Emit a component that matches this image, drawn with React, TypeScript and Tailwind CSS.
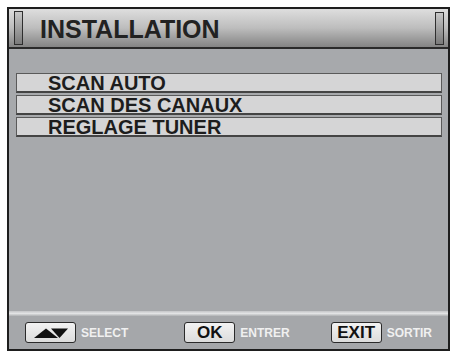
const font = { fontFamily: '"Liberation Sans", Arial, sans-serif' };

function MenuItem({ label }: { label: string }) {
  return (
    <div className="flex h-[20px] items-center border border-b-2 border-[#5a5a5a] border-b-[#444] bg-[#d5d5d6] pl-[31px]">
      <span className="pt-[1px] text-[20px] font-bold leading-none text-[#1d1d1d]">{label}</span>
    </div>
  );
}

function Key({ children, width }: { children: React.ReactNode; width: string }) {
  return (
    <div
      className={`flex h-[21px] ${width} items-center justify-center rounded-[3px] border border-[#2a2a2a] bg-gradient-to-b from-[#f2f2f2] to-[#dcdcdc]`}
    >
      {children}
    </div>
  );
}

function Hint({ text }: { text: string }) {
  return <span className="ml-[5px] text-[12px] font-bold leading-none text-[#f0f0f0]">{text}</span>;
}

export default function App() {
  return (
    <div className="h-[357px] w-[453px] bg-white pl-[7px] pt-[7px]" style={font}>
      <div className="flex h-[344px] w-[443px] flex-col border-2 border-[#1e1e1e] bg-[#a7a9ac]">
        {/* title bar */}
        <div className="flex h-[40px] items-center border-b-2 border-[#2a2a2a] bg-gradient-to-b from-[#dedede] via-[#bdbdbd] to-[#848484] pl-[5px] pr-[4px]">
          <div className="h-[34px] w-[9px] border border-[#2e2e2e] bg-gradient-to-b from-[#c8c8c8] to-[#7a7a7a]" />
          <h1 className="ml-[17px] flex-1 pt-[2px] text-[25px] font-bold leading-none text-[#222]">INSTALLATION</h1>
          <div className="h-[33px] w-[9px] border border-[#2e2e2e] bg-gradient-to-b from-[#c8c8c8] to-[#7a7a7a]" />
        </div>

        {/* menu */}
        <div className="flex flex-1 flex-col gap-[2px] pl-[7px] pr-[6px] pt-[24px]">
          <MenuItem label="SCAN AUTO" />
          <MenuItem label="SCAN DES CANAUX" />
          <MenuItem label="REGLAGE TUNER" />
        </div>

        {/* footer */}
        <div className="h-[5px] bg-gradient-to-b from-[#c4c5c7] via-[#e2e3e4] to-[#b0b2b4]" />
        <div className="flex h-[33px] items-center bg-[#a5a7aa] pl-[16px]">
          <Key width="w-[51px]">
            <svg width="34" height="10" viewBox="0 0 34 10">
              <polygon points="0,10 12,0.5 24,10" fill="#111" />
              <polygon points="17,0.5 34,0.5 25.5,10" fill="#111" />
            </svg>
          </Key>
          <Hint text="SELECT" />
          <div className="ml-[56px]">
            <Key width="w-[51px]">
              <span className="text-[17px] font-bold leading-none text-[#111]">OK</span>
            </Key>
          </div>
          <Hint text="ENTRER" />
          <div className="ml-[41px]">
            <Key width="w-[51px]">
              <span className="text-[17px] font-bold leading-none text-[#111]">EXIT</span>
            </Key>
          </div>
          <Hint text="SORTIR" />
        </div>
      </div>
    </div>
  );
}
